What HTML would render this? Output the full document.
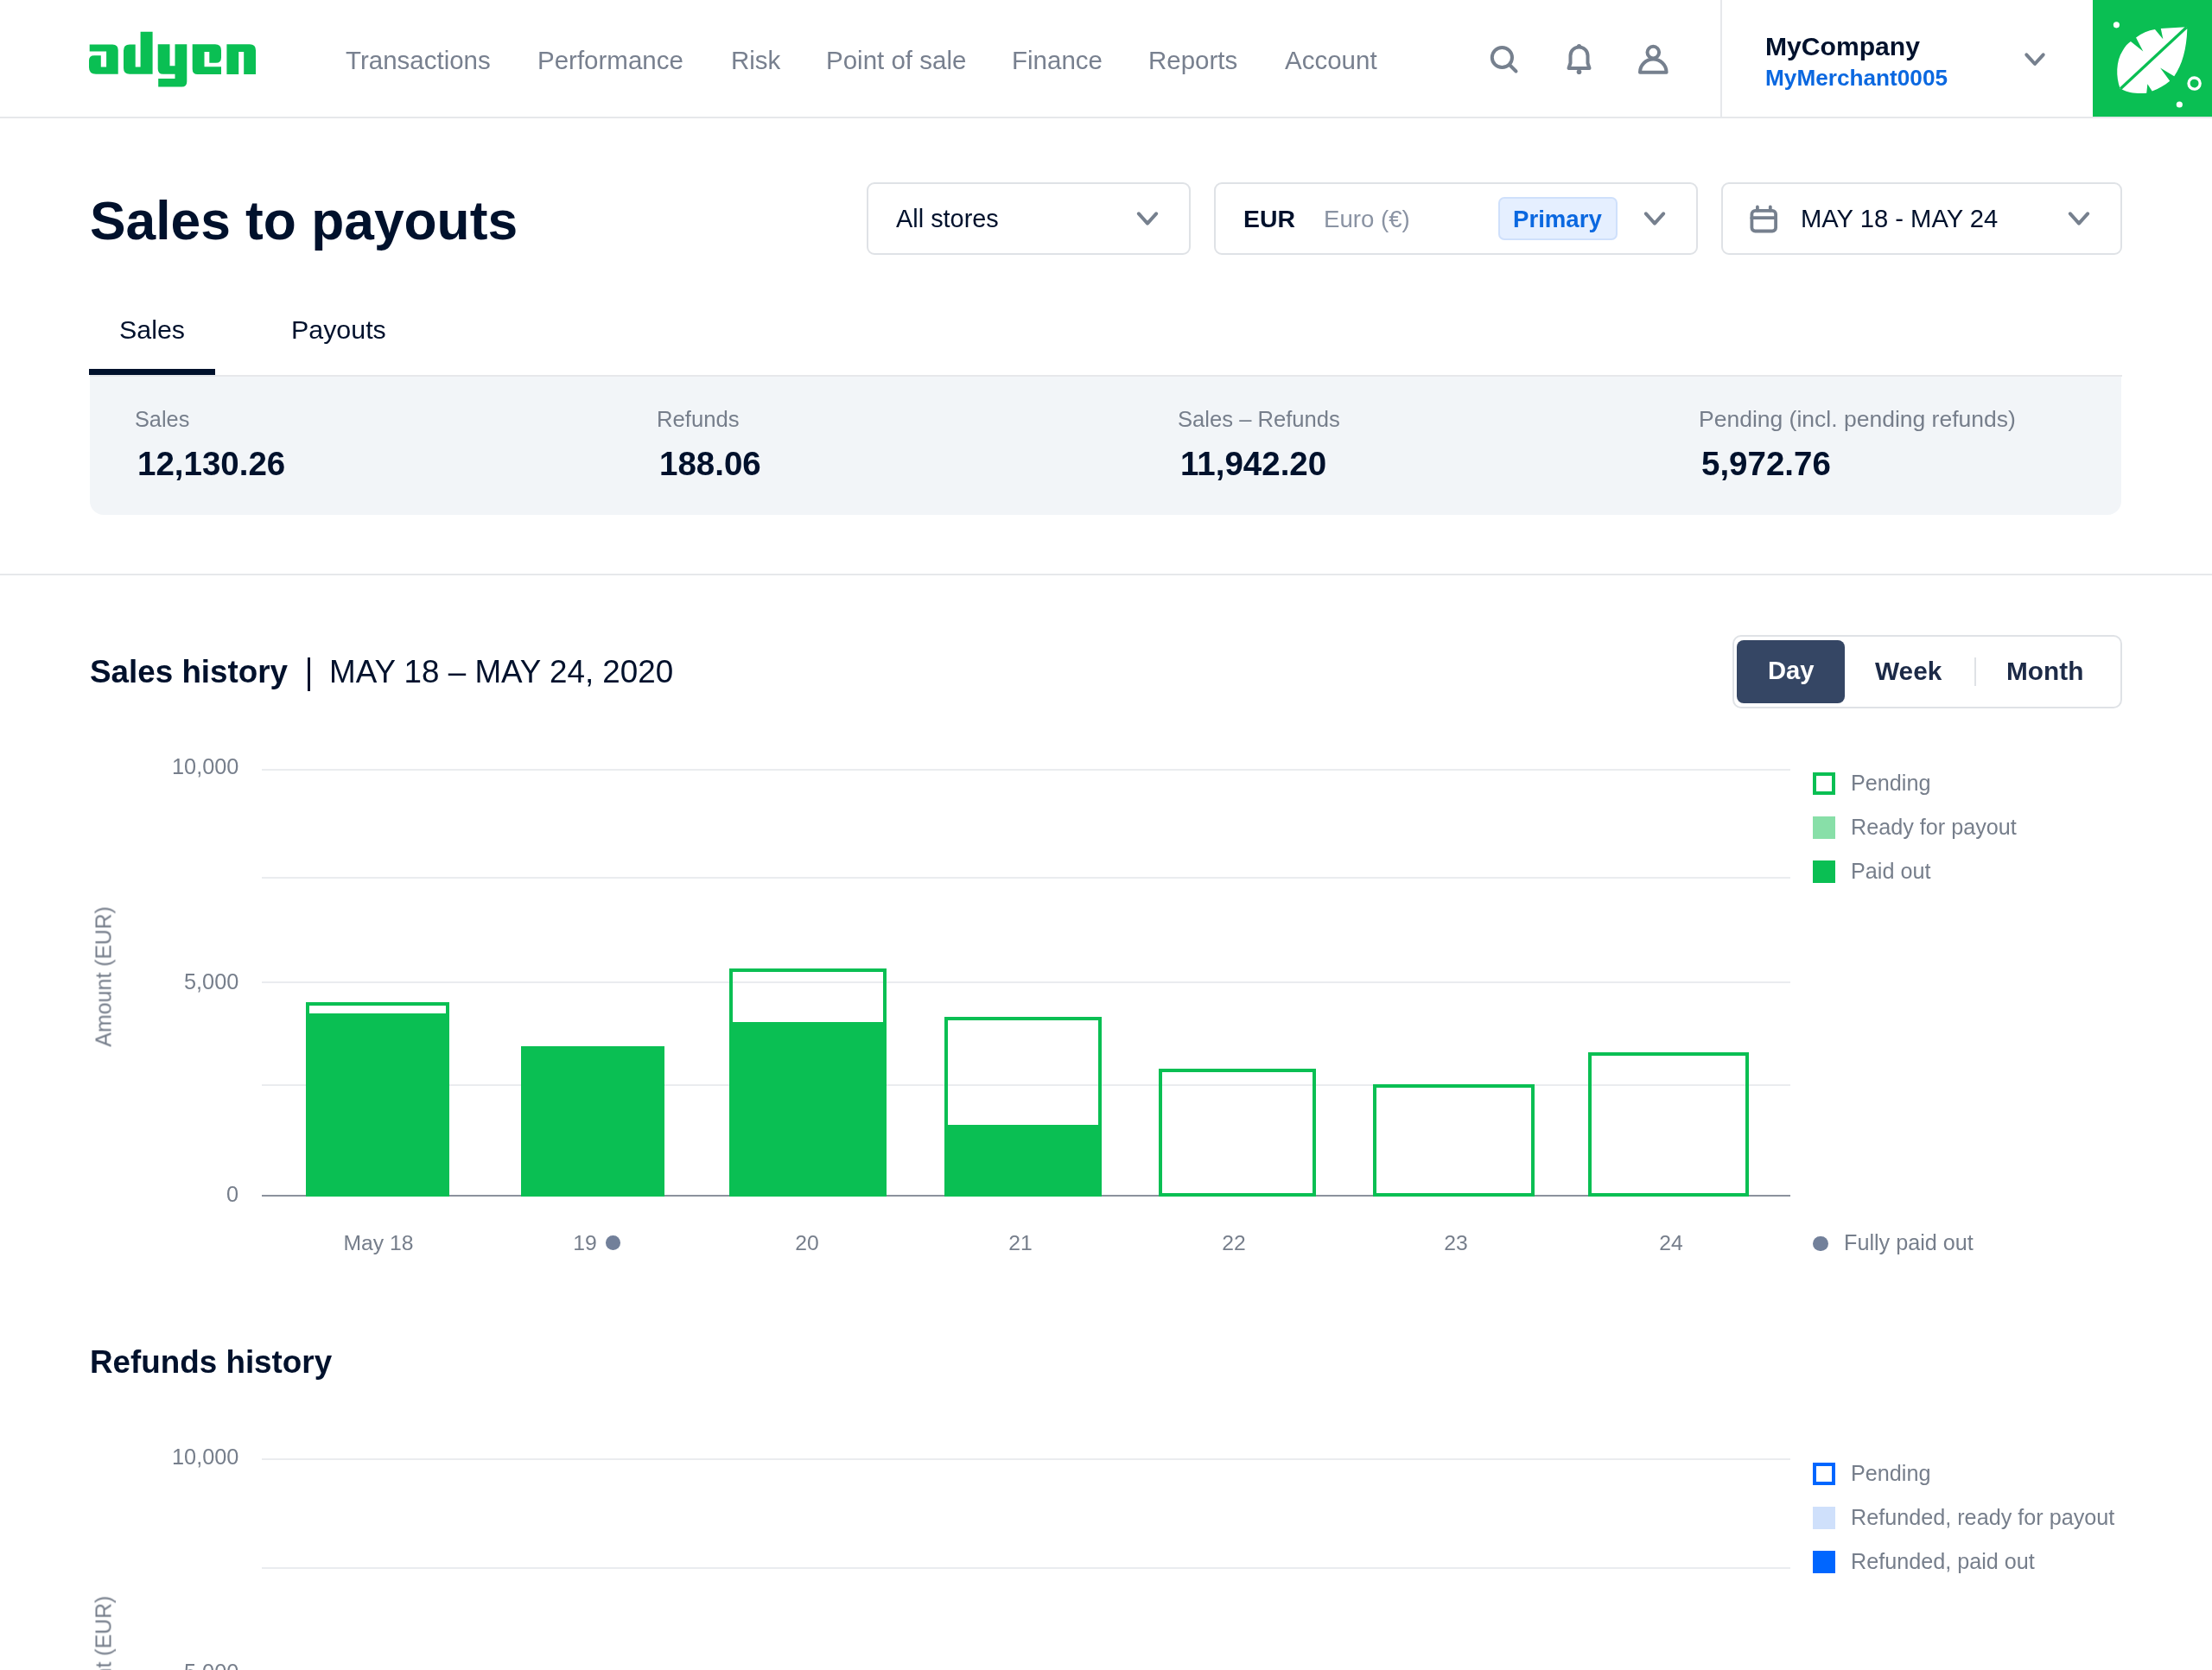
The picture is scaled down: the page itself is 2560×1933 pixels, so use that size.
<!DOCTYPE html>
<html><head><meta charset="utf-8">
<style>
html,body{margin:0;padding:0;background:#fff;}
body{width:2560px;height:1933px;position:relative;overflow:hidden;font-family:"Liberation Sans",sans-serif;}
.t{position:absolute;line-height:1;white-space:nowrap;will-change:transform;}
.abs{position:absolute;}
</style></head><body>
<div class="abs" style="left:0;top:135px;width:2560px;height:2px;background:#e6e8eb;"></div>
<svg class="abs" style="left:0;top:0" width="320" height="120" viewBox="0 0 320 120">
<g fill="#0abf53">
<path d="M103.7,51.5 H130.2 Q136.7,51.5 136.7,58 V85.8 H111 Q103,85.8 103,78 V70 Q103,64.2 109,64.2 H116.8 V77.5 H123.1 V59.6 H103.7 Z"/>
<path d="M162.6,36.8 H176.6 V85.8 H150 Q143,85.8 143,78.8 V58.5 Q143,51.5 150,51.5 H156.7 V77.5 H162.6 Z"/>
<path d="M182.7,51.2 H196.5 V76.3 H202.5 V51.2 H216.3 V94.6 Q216.3,100.6 210.3,100.6 H183.2 V91 H202.5 V85.7 H188.7 Q182.7,85.7 182.7,79.7 Z"/>
<path d="M222.7,51.2 H249 Q256,51.2 256,58.2 V66.7 Q256,72.7 250,72.7 H242.3 V60 H236.5 V77.2 H256 V86 H228.7 Q222.7,86 222.7,80 Z"/>
<path d="M262.4,51.2 H289 Q296,51.2 296,58.2 V86 H282.2 V60 H276.2 V86 H262.4 Z"/>
</g></svg>
<div class="t" style="left:400px;top:54.52px;font-size:29.5px;color:#78808f;">Transactions</div>
<div class="t" style="left:622px;top:54.52px;font-size:29.5px;color:#78808f;">Performance</div>
<div class="t" style="left:846px;top:54.52px;font-size:29.5px;color:#78808f;">Risk</div>
<div class="t" style="left:956px;top:54.52px;font-size:29.5px;color:#78808f;">Point of sale</div>
<div class="t" style="left:1171px;top:54.52px;font-size:29.5px;color:#78808f;">Finance</div>
<div class="t" style="left:1329px;top:54.52px;font-size:29.5px;color:#78808f;">Reports</div>
<div class="t" style="left:1487px;top:54.52px;font-size:29.5px;color:#78808f;">Account</div>
<svg class="abs" style="left:1700px;top:20px" width="300" height="100" viewBox="1700 20 300 100">
<g fill="none" stroke="#76808e" stroke-width="4" stroke-linecap="round" stroke-linejoin="round">
<circle cx="1738.4" cy="66.5" r="11.6"/>
<line x1="1747.5" y1="75.5" x2="1754.5" y2="82.5"/>
<path d="M1815.5,79 H1839.5 L1837.5,73 V64.5 A10,10 0 0 0 1817.5,64.5 V73 Z"/>
<circle cx="1913.3" cy="60.6" r="6.8"/>
<path d="M1898,83.8 A15.3,15.3 0 0 1 1928.6,83.8 Z"/>
</g>
<g fill="#76808e"><circle cx="1827.5" cy="53.5" r="2.6"/><circle cx="1827.5" cy="83.3" r="2.8"/></g>
</svg>
<div class="abs" style="left:1991px;top:0;width:2px;height:136px;background:#e6e8eb;"></div>
<div class="t" style="left:2043px;top:38.62px;font-size:30.1px;color:#00112c;font-weight:bold;">MyCompany</div>
<div class="t" style="left:2043px;top:76.83px;font-size:26.2px;color:#0b68e0;font-weight:bold;">MyMerchant0005</div>
<svg class="abs" style="left:2330px;top:50px" width="50" height="40" viewBox="2330 50 50 40">
<path d="M2345.3,63.3 L2355,74 L2364.7,63.3" fill="none" stroke="#76808e" stroke-width="4" stroke-linecap="round" stroke-linejoin="round"/></svg>
<div class="abs" style="left:2422px;top:0;width:138px;height:135px;background:#0abf53;"></div>
<svg class="abs" style="left:2430px;top:10px" width="130" height="120" viewBox="0 0 1809 1670">
<g fill="#fff">
<circle cx="270" cy="262" r="50"/><circle cx="1285" cy="1545" r="50"/>
<circle cx="1525" cy="1205" r="92" fill="none" stroke="#fff" stroke-width="46"/>
<path d="M330,1290 C260,1100 260,850 370,680 C410,610 450,560 500,530 L700,690 L585,465 C680,400 780,350 890,335 L1020,490 L985,320 L1395,295 L1410,330 C1400,650 1330,900 1200,1090 L975,955 L1130,1165 C1040,1240 950,1290 845,1330 L770,1215 L755,1360 C600,1375 450,1350 360,1300 Z"/>
</g>
<line x1="335" y1="1290" x2="1400" y2="300" stroke="#0abf53" stroke-width="45"/>
</svg>
<div class="t" style="left:104px;top:225.25px;font-size:62.3px;color:#00112c;font-weight:bold;">Sales to payouts</div>
<div class="abs" style="left:1003px;top:211px;width:375px;height:84px;box-sizing:border-box;border:2px solid #dfe2e6;border-radius:9px;"></div>
<div class="abs" style="left:1405px;top:211px;width:560px;height:84px;box-sizing:border-box;border:2px solid #dfe2e6;border-radius:9px;"></div>
<div class="abs" style="left:1992px;top:211px;width:464px;height:84px;box-sizing:border-box;border:2px solid #dfe2e6;border-radius:9px;"></div>
<div class="t" style="left:1037px;top:239.44px;font-size:28.9px;color:#00112c;">All stores</div>
<div class="t" style="left:1439px;top:239.36px;font-size:28.4px;color:#00112c;font-weight:bold;">EUR</div>
<div class="t" style="left:1532px;top:240.04px;font-size:27.6px;color:#8a93a3;">Euro (€)</div>
<div class="abs" style="left:1734px;top:228px;width:138px;height:50px;box-sizing:border-box;background:#e5efff;border:2px solid #cfe0fb;border-radius:7px;"></div>
<div class="t" style="left:1751px;top:239.74px;font-size:27.6px;color:#0b68e0;font-weight:bold;">Primary</div>
<div class="t" style="left:2084px;top:238.68px;font-size:29.2px;color:#00112c;">MAY 18 - MAY 24</div>
<svg class="abs" style="left:1308.4px;top:233.4px" width="40" height="40" viewBox="1308.4 233.4 40 40"><path d="M1318.3000000000002,247.70000000000002 L1328.4,259.0 L1338.5,247.70000000000002" fill="none" stroke="#76808e" stroke-width="4" stroke-linecap="round" stroke-linejoin="round"/></svg>
<svg class="abs" style="left:1895px;top:233.4px" width="40" height="40" viewBox="1895 233.4 40 40"><path d="M1904.9,247.70000000000002 L1915,259.0 L1925.1,247.70000000000002" fill="none" stroke="#76808e" stroke-width="4" stroke-linecap="round" stroke-linejoin="round"/></svg>
<svg class="abs" style="left:2386.4px;top:233.4px" width="40" height="40" viewBox="2386.4 233.4 40 40"><path d="M2396.3,247.70000000000002 L2406.4,259.0 L2416.5,247.70000000000002" fill="none" stroke="#76808e" stroke-width="4" stroke-linecap="round" stroke-linejoin="round"/></svg>
<svg class="abs" style="left:2015px;top:230px" width="50" height="50" viewBox="2015 230 50 50">
<g fill="none" stroke="#76808e" stroke-width="3.8" stroke-linecap="round">
<rect x="2027.4" y="243.8" width="27.7" height="23.7" rx="4"/>
<line x1="2027.4" y1="252.2" x2="2055.1" y2="252.2"/>
<line x1="2033.9" y1="239.5" x2="2033.9" y2="243.5"/>
<line x1="2048.8" y1="239.5" x2="2048.8" y2="243.5"/>
</g></svg>
<div class="t" style="left:138px;top:365.86px;font-size:30.4px;color:#00112c;">Sales</div>
<div class="t" style="left:337px;top:365.86px;font-size:30.4px;color:#00112c;">Payouts</div>
<div class="abs" style="left:104px;top:434px;width:2352px;height:2px;background:#e6e8eb;"></div>
<div class="abs" style="left:104px;top:436px;width:2351px;height:160px;background:#f2f5f8;border-radius:0 0 16px 16px;"></div>
<div class="abs" style="left:103px;top:427px;width:146px;height:7px;background:#00112c;"></div>
<div class="t" style="left:156px;top:473.39px;font-size:25.3px;color:#767e8b;">Sales</div>
<div class="t" style="left:158.5px;top:518.27px;font-size:38.5px;color:#00112c;font-weight:bold;">12,130.26</div>
<div class="t" style="left:760px;top:473.05px;font-size:25.7px;color:#767e8b;">Refunds</div>
<div class="t" style="left:762.5px;top:518.27px;font-size:38.5px;color:#00112c;font-weight:bold;">188.06</div>
<div class="t" style="left:1363px;top:473.14px;font-size:25.6px;color:#767e8b;">Sales – Refunds</div>
<div class="t" style="left:1365.5px;top:518.27px;font-size:38.5px;color:#00112c;font-weight:bold;">11,942.20</div>
<div class="t" style="left:1966px;top:472.38px;font-size:26.5px;color:#767e8b;">Pending (incl. pending refunds)</div>
<div class="t" style="left:1968.5px;top:518.27px;font-size:38.5px;color:#00112c;font-weight:bold;">5,972.76</div>
<div class="abs" style="left:0;top:664px;width:2560px;height:2px;background:#e6e8eb;"></div>
<div class="t" style="left:104px;top:760.32px;font-size:36.8px;color:#00112c;font-weight:bold;">Sales history</div>
<div class="abs" style="left:356px;top:761px;width:3px;height:39px;background:#00112c;"></div>
<div class="t" style="left:381px;top:760.32px;font-size:36.8px;color:#00112c;">MAY 18 – MAY 24, 2020</div>
<div class="abs" style="left:303px;top:889.5px;width:1769px;height:2px;background:#eaecef;"></div>
<div class="abs" style="left:303px;top:1015.4px;width:1769px;height:2px;background:#eaecef;"></div>
<div class="abs" style="left:303px;top:1136.3px;width:1769px;height:2px;background:#eaecef;"></div>
<div class="abs" style="left:303px;top:1255.2px;width:1769px;height:2px;background:#eaecef;"></div>
<div class="abs" style="left:303px;top:1383.3px;width:1769px;height:2px;background:#8b929d;"></div>
<div class="t" style="right:2283.5px;top:875.10px;font-size:25.3px;color:#767e8b;">10,000</div>
<div class="t" style="right:2283.5px;top:1123.99px;font-size:25.3px;color:#767e8b;">5,000</div>
<div class="t" style="right:2283.5px;top:1369.99px;font-size:25.3px;color:#767e8b;">0</div>
<div class="t" style="left:19.599999999999994px;top:1117.5px;width:200px;text-align:center;font-size:25px;color:#767e8b;transform:rotate(-90deg);">Amount (EUR)</div>
<div class="abs" style="left:2098px;top:894px;width:26px;height:26px;box-sizing:border-box;border:4px solid #0abf53;"></div>
<div class="t" style="left:2141.5px;top:894.28px;font-size:25.2px;color:#767e8b;">Pending</div>
<div class="abs" style="left:2098px;top:945px;width:26px;height:26px;background:#88dfa8;"></div>
<div class="t" style="left:2141.5px;top:945.28px;font-size:25.2px;color:#767e8b;">Ready for payout</div>
<div class="abs" style="left:2098px;top:996px;width:26px;height:26px;background:#0abf53;"></div>
<div class="t" style="left:2141.5px;top:996.28px;font-size:25.2px;color:#767e8b;">Paid out</div>
<div class="abs" style="left:2005px;top:735px;width:451px;height:85px;box-sizing:border-box;border:2px solid #dfe2e6;border-radius:10px;"></div>
<div class="abs" style="left:2010px;top:741px;width:125px;height:73px;background:#354664;border-radius:8px;"></div>
<div class="abs" style="left:2285px;top:761px;width:2px;height:33px;background:#dfe2e6;"></div>
<div class="t" style="left:2045.5px;top:762.28px;font-size:29.2px;color:#fff;font-weight:bold;">Day</div>
<div class="t" style="left:2170px;top:761.77px;font-size:29.8px;color:#1c2a47;font-weight:bold;">Week</div>
<div class="t" style="left:2322px;top:761.77px;font-size:29.8px;color:#1c2a47;font-weight:bold;">Month</div>
<div class="abs" style="left:353.5px;top:1159.7px;width:166.1px;height:225.3px;box-sizing:border-box;border:4.2px solid #0abf53;"></div>
<div class="abs" style="left:353.5px;top:1172.6px;width:166.1px;height:212.4px;background:#0abf53;"></div>
<div class="abs" style="left:602.8px;top:1211.3px;width:166.0px;height:173.7px;box-sizing:border-box;border:4.2px solid #0abf53;"></div>
<div class="abs" style="left:602.8px;top:1211.3px;width:166.0px;height:173.7px;background:#0abf53;"></div>
<div class="abs" style="left:843.7px;top:1121px;width:182.3px;height:264.0px;box-sizing:border-box;border:4.2px solid #0abf53;"></div>
<div class="abs" style="left:843.7px;top:1183.3px;width:182.3px;height:201.7px;background:#0abf53;"></div>
<div class="abs" style="left:1092.5px;top:1177px;width:182.3px;height:208.0px;box-sizing:border-box;border:4.2px solid #0abf53;"></div>
<div class="abs" style="left:1092.5px;top:1301.5px;width:182.3px;height:83.5px;background:#0abf53;"></div>
<div class="abs" style="left:1341px;top:1237.2px;width:182.4px;height:147.8px;box-sizing:border-box;border:4.2px solid #0abf53;"></div>
<div class="abs" style="left:1588.6px;top:1254.6px;width:187.4px;height:130.4px;box-sizing:border-box;border:4.2px solid #0abf53;"></div>
<div class="abs" style="left:1837.5px;top:1218.2px;width:186.1px;height:166.8px;box-sizing:border-box;border:4.2px solid #0abf53;"></div>
<div class="t" style="left:338.3px;top:1426.61px;width:200px;text-align:center;font-size:24.7px;color:#767e8b;">May 18</div>
<div class="t" style="left:577px;top:1426.61px;width:200px;text-align:center;font-size:24.7px;color:#767e8b;">19</div>
<div class="t" style="left:833.6px;top:1426.61px;width:200px;text-align:center;font-size:24.7px;color:#767e8b;">20</div>
<div class="t" style="left:1080.5px;top:1426.61px;width:200px;text-align:center;font-size:24.7px;color:#767e8b;">21</div>
<div class="t" style="left:1327.7px;top:1426.61px;width:200px;text-align:center;font-size:24.7px;color:#767e8b;">22</div>
<div class="t" style="left:1584.8px;top:1426.61px;width:200px;text-align:center;font-size:24.7px;color:#767e8b;">23</div>
<div class="t" style="left:1833.5px;top:1426.61px;width:200px;text-align:center;font-size:24.7px;color:#767e8b;">24</div>
<div class="abs" style="left:701.1px;top:1430.4px;width:16.6px;height:16.6px;border-radius:50%;background:#72809a;"></div>
<div class="abs" style="left:2098.4px;top:1430.6000000000001px;width:17.2px;height:17.2px;border-radius:50%;background:#72809a;"></div>
<div class="t" style="left:2133.5px;top:1426.18px;font-size:25.2px;color:#767e8b;">Fully paid out</div>
<div class="t" style="left:104px;top:1558.72px;font-size:36.8px;color:#00112c;font-weight:bold;">Refunds history</div>
<div class="abs" style="left:303px;top:1688.3px;width:1769px;height:2px;background:#eaecef;"></div>
<div class="abs" style="left:303px;top:1814.2px;width:1769px;height:2px;background:#eaecef;"></div>
<div class="abs" style="left:303px;top:1935.1px;width:1769px;height:2px;background:#eaecef;"></div>
<div class="abs" style="left:303px;top:2054.0px;width:1769px;height:2px;background:#eaecef;"></div>
<div class="t" style="right:2283.5px;top:1673.89px;font-size:25.3px;color:#767e8b;">10,000</div>
<div class="t" style="right:2283.5px;top:1922.79px;font-size:25.3px;color:#767e8b;">5,000</div>
<div class="t" style="right:2283.5px;top:2168.80px;font-size:25.3px;color:#767e8b;">0</div>
<div class="t" style="left:19.599999999999994px;top:1916.3px;width:200px;text-align:center;font-size:25px;color:#767e8b;transform:rotate(-90deg);">Amount (EUR)</div>
<div class="abs" style="left:2098px;top:1692.8px;width:26px;height:26px;box-sizing:border-box;border:4px solid #0066ff;"></div>
<div class="t" style="left:2141.5px;top:1693.08px;font-size:25.2px;color:#767e8b;">Pending</div>
<div class="abs" style="left:2098px;top:1743.8px;width:26px;height:26px;background:#cfe0fb;"></div>
<div class="t" style="left:2141.5px;top:1744.08px;font-size:25.2px;color:#767e8b;">Refunded, ready for payout</div>
<div class="abs" style="left:2098px;top:1794.8px;width:26px;height:26px;background:#0066ff;"></div>
<div class="t" style="left:2141.5px;top:1795.08px;font-size:25.2px;color:#767e8b;">Refunded, paid out</div>
</body></html>
